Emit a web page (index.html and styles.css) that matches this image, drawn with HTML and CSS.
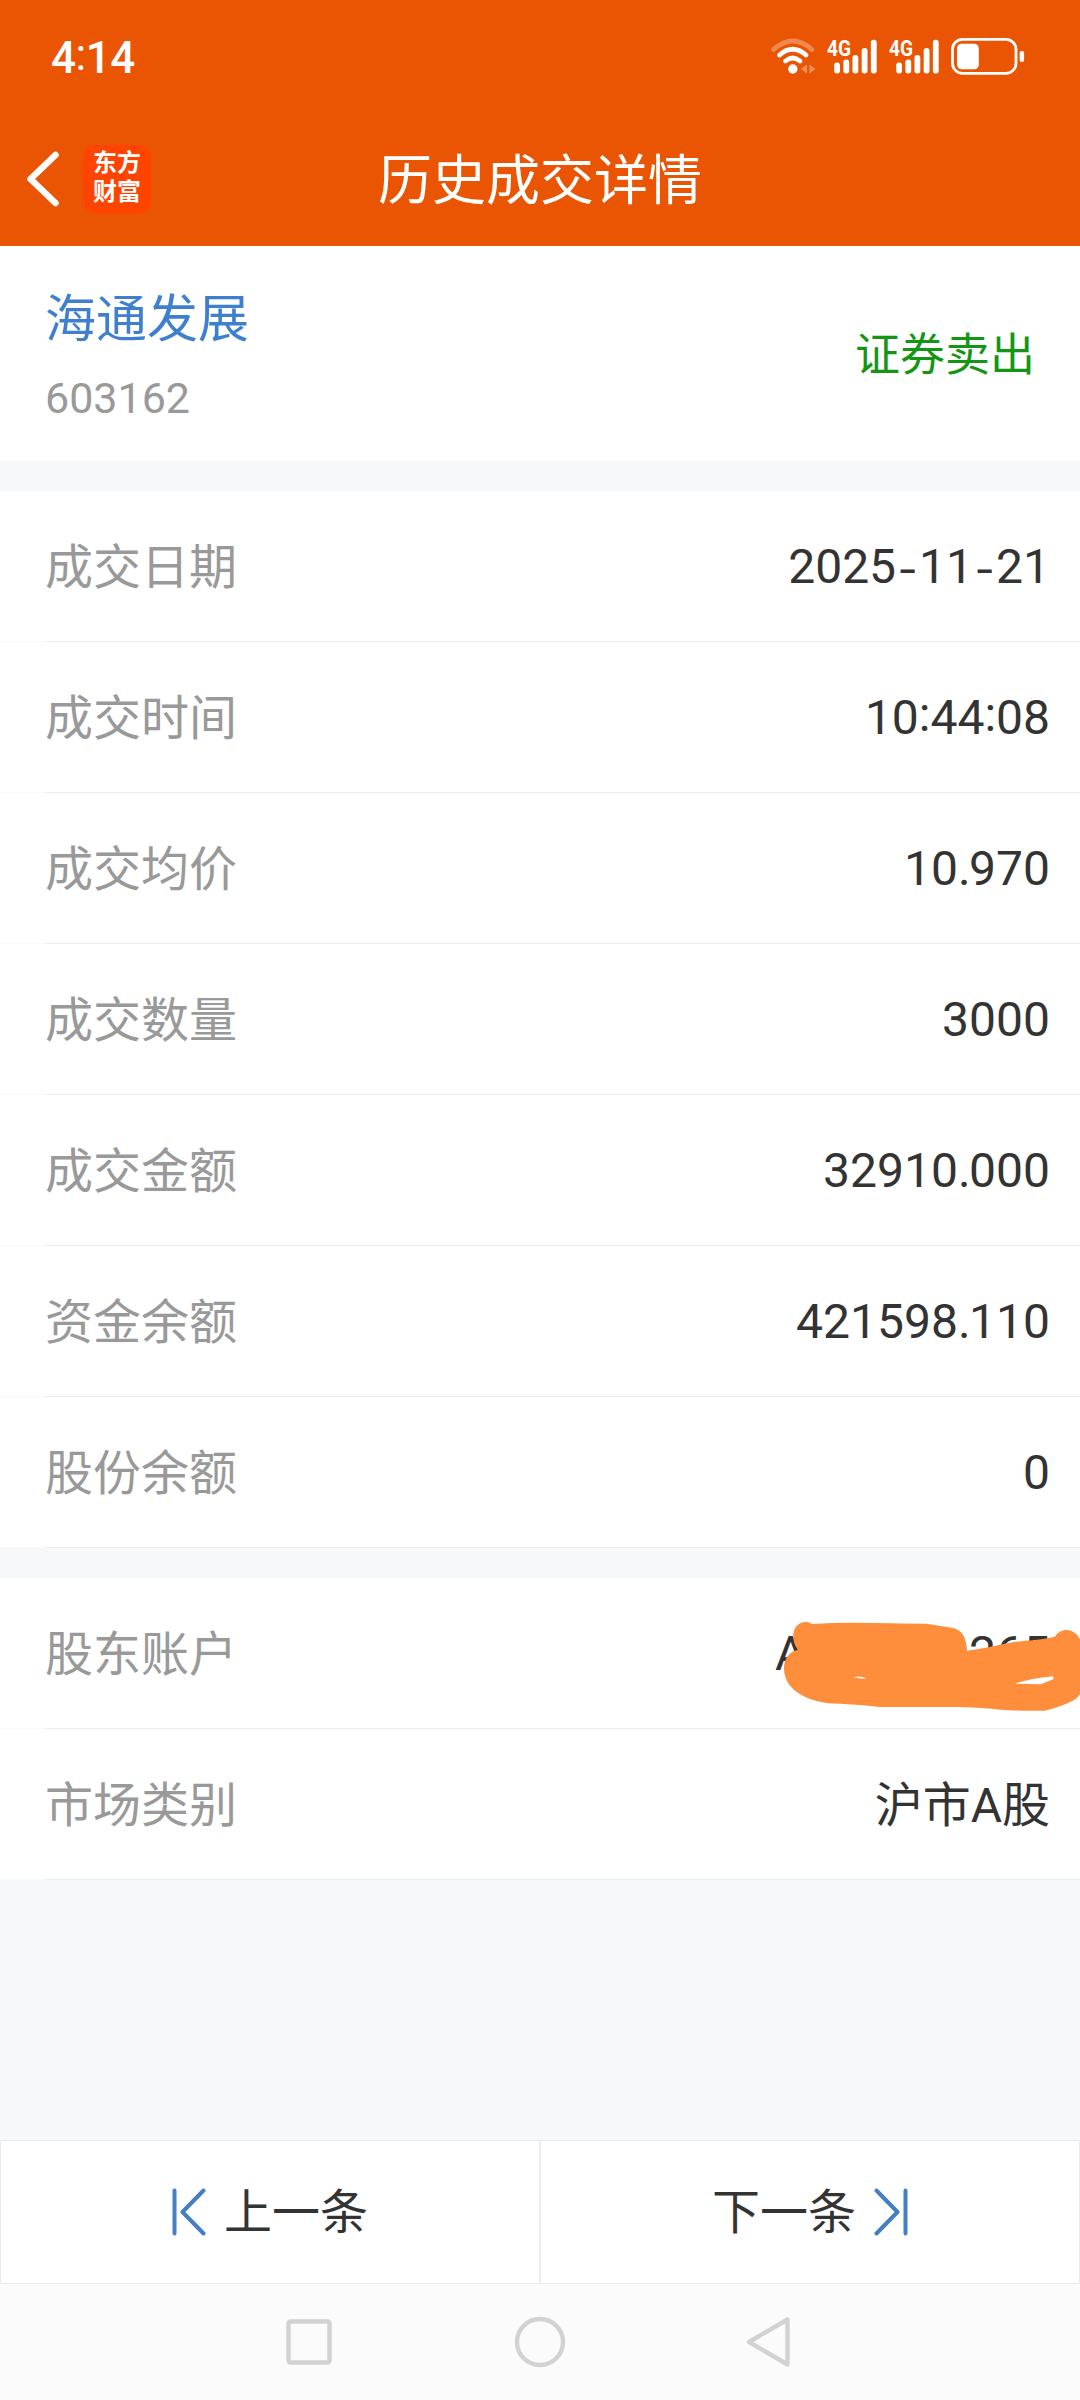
FILE: index.html
```html
<!doctype html>
<html lang="zh-CN">
<head>
<meta charset="utf-8">
<title>历史成交详情</title>
<link rel="stylesheet" href="styles.css">
</head>

<body>
<div id="app">
	<div class="header">
		<div class="status">
			<span class="time">4<i class="colon">:</i>14</span>
			<svg class="status-icons" width="246" height="44" viewBox="0 0 246 44">
				<!-- wifi -->
				<g fill="none" stroke="#fff" stroke-width="4.8" stroke-linecap="round">
					<path d="M3.5 15.5Q22.7 -1.5 42 15.5" opacity=".3"/>
					<path d="M9.5 21Q22.7 9.500 36 21"/>
					<path d="M15.500 27Q22.700 21 30 27"/>
				</g>
				<circle cx="22.8" cy="35" r="4.7" fill="#fff"/>
				<path d="M37 30.500v9l-6-4.500zM39.500 30.500v9l6-4.500z" fill="#fff" opacity=".35"/>
				<!-- sim 1 -->
				<g fill="#fff">
					<text class="net" x="57" y="22" textLength="24" lengthAdjust="spacingAndGlyphs">4G</text>
					<rect x="64.2" y="28.5" width="5.8" height="11" rx="2.7"/>
					<rect x="73.4" y="25.5" width="5.8" height="14" rx="2.7"/>
					<rect x="82.5" y="21" width="5.8" height="18.5" rx="2.7"/>
					<rect x="91.7" y="14" width="5.8" height="25.5" rx="2.7"/>
					<rect x="100.9" y="5.7" width="5.8" height="33.8" rx="2.7"/>
				</g>
				<!-- sim 2 -->
				<g fill="#fff">
					<text class="net" x="119" y="22" textLength="24" lengthAdjust="spacingAndGlyphs">4G</text>
					<rect x="126.2" y="28.5" width="5.8" height="11" rx="2.7"/>
					<rect x="135.4" y="25.5" width="5.8" height="14" rx="2.7"/>
					<rect x="144.5" y="21" width="5.8" height="18.5" rx="2.7"/>
					<rect x="153.7" y="14" width="5.8" height="25.5" rx="2.7"/>
					<rect x="162.9" y="5.7" width="5.8" height="33.8" rx="2.7"/>
				</g>
				<!-- battery -->
				<rect x="182.5" y="5.3" width="63.5" height="34" rx="10" fill="none" stroke="#fff" stroke-width="2.8"/>
				<rect x="187" y="9.7" width="21.8" height="25.6" rx="4.5" fill="#fff"/>
				<rect x="249.7" y="17" width="4.4" height="11" rx="2" fill="#fff"/>
			</svg>
		</div>
		<div class="nav">
			<svg class="back" width="35" height="60" viewBox="0 0 35 60"><path d="M30.500 6L5.500 30l25 24"/></svg>
			<div class="logo">东方<br>财富</div>
			<h1>历史成交详情</h1>
		</div>
	</div>

	<div class="stock">
		<div>
			<p class="name">海通发展</p>
			<p class="code">603162</p>
		</div>
		<span class="side">证券卖出</span>
	</div>

	<ul class="list">
		<li><label>成交日期</label><span>2025<i class="dash">-</i>11<i class="dash">-</i>21</span></li>
		<li><label>成交时间</label><span>10<i class="colon">:</i>44<i class="colon">:</i>08</span></li>
		<li><label>成交均价</label><span>10<i class="dot">.</i>970</span></li>
		<li><label>成交数量</label><span>3000</span></li>
		<li><label>成交金额</label><span>32910<i class="dot">.</i>000</span></li>
		<li><label>资金余额</label><span>421598<i class="dot">.</i>110</span></li>
		<li><label>股份余额</label><span>0</span></li>
	</ul>

	<ul class="list">
		<li>
			<label>股东账户</label>
			<span class="number"><b>A</b><b>0265</b></span>
			<svg class="mask" width="340" height="150" viewBox="0 0 1020 450">
				<path fill="#ff8e3c" fill-rule="evenodd" d="M215 132Q300 127 400 129T560 131L640 144C668 152 680 175 680 212C750 205 780 190 850 183Q910 178 945 170C960 145 1000 140 1020 178V342C1010 362 975 376 915 392Q860 393 805 391C750 386 700 381 610 381H420Q330 372 265 370C190 360 132 325 132 265C132 235 148 215 174 209C162 195 159 180 160 162C164 130 195 118 215 132ZM340 291Q358 297 380 296Q362 286 340 291ZM825 311Q870 295 940 289V298L902 313Q865 311 825 311Z"/>
			</svg>
		</li>
		<li><label>市场类别</label><span class="cn">沪市A股</span></li>
	</ul>

	<div class="pager">
		<a class="btn">
			<svg width="34" height="48" viewBox="0 0 34 48"><path d="M2.500 2.500v43M31.500 2.500L10.500 24l21 21.500"/></svg>
			<span class="cn">上一条</span>
		</a>
		<a class="btn">
			<span class="cn">下一条</span>
			<svg width="34" height="48" viewBox="0 0 34 48"><path d="M31.500 2.500v43M2.500 2.500L23.500 24l-21 21.500"/></svg>
		</a>
	</div>

	<div class="keys">
		<svg width="52" height="52" viewBox="0 0 52 52"><rect x="5.500" y="5.500" width="41" height="41" rx="2"/></svg>
		<svg width="52" height="52" viewBox="0 0 52 52"><circle cx="26" cy="26" r="23"/></svg>
		<svg width="52" height="52" viewBox="0 0 52 52"><path d="M42.500 3.500v45L4 26z"/></svg>
	</div>
</div>
</body>
</html>
```

FILE: styles.css
```css
*{margin:0;padding:0;box-sizing:border-box}
body{background:#f6f8fa;font-family:Roboto,"Noto Sans CJK SC",sans-serif;color:#333}
ul{list-style:none}
i,b{font-style:normal;font-weight:normal}
svg{display:block;flex:none}
#app{display:flex;flex-direction:column;width:1080px;height:2400px;overflow:hidden}

/* 顶部 */
.header{height:246px;background:#ea5504;color:#fff}
.status{display:flex;justify-content:space-between;height:112px;padding:34px 64px 0 51px}
.status .time{font-size:44px;font-weight:500;line-height:48px;letter-spacing:-.5px}
.status-icons{overflow:visible}
.net{font-size:22px;font-weight:700}
.colon{position:relative;top:-3px}
.nav{position:relative;display:flex;align-items:center;height:134px;padding-left:25px}
.back path{fill:none;stroke:#fff;stroke-width:6.5;stroke-linecap:round;stroke-linejoin:round}
.logo{width:68px;height:68px;margin-left:23px;padding-top:4px;border-radius:12px;background:#ff4400;font-size:24px;font-weight:700;line-height:29px;text-align:center}
.nav h1{position:absolute;left:0;right:0;top:30px;font-size:54px;font-weight:400;line-height:80px;text-align:center}

/* 股票 */
.stock{display:flex;justify-content:space-between;align-items:center;height:215px;padding:2px 45px 0;background:#fff}
.stock .name{font-size:51px;line-height:76px;color:#3f7fd0}
.stock .code{margin-top:10px;font-size:43px;line-height:60px;color:#999}
.stock .side{padding-top:2px;font-size:45px;line-height:66px;color:#149614}

/* 明细 */
.list{margin-top:30px;background:#fff}
.list li{position:relative;display:flex;justify-content:space-between;align-items:center;height:151px;padding:0 30px 0 45px;font-size:48px;background:linear-gradient(to right,#f9f9f9 45px,#ebebeb 45px) bottom/100% 1px no-repeat}
.list label{padding-bottom:8px;color:#999}
.cn{padding-bottom:8px}
.dash{display:inline-block;position:relative;top:2px;width:23px;text-align:center;font-size:44px;line-height:1;font-family:Inter,sans-serif}
.dot{letter-spacing:-1.5px}
.number{display:flex;justify-content:space-between;width:275px}
.mask{position:absolute;top:2px;right:0}

/* 翻页 */
.pager{display:flex;height:144px;margin-top:auto}
.btn{display:flex;flex:1;justify-content:center;align-items:center;gap:18px;border:1px solid #ebebeb;background:#fff;font-size:48px}
.btn path{fill:none;stroke:#447fc3;stroke-width:4;stroke-linecap:round;stroke-linejoin:round}

.keys{display:flex;justify-content:center;gap:179px;height:116px;padding-top:32px;background:#fbfbfb}
.keys svg *{fill:none;stroke:#d2d2d2;stroke-width:4.4;stroke-linejoin:round}
```
